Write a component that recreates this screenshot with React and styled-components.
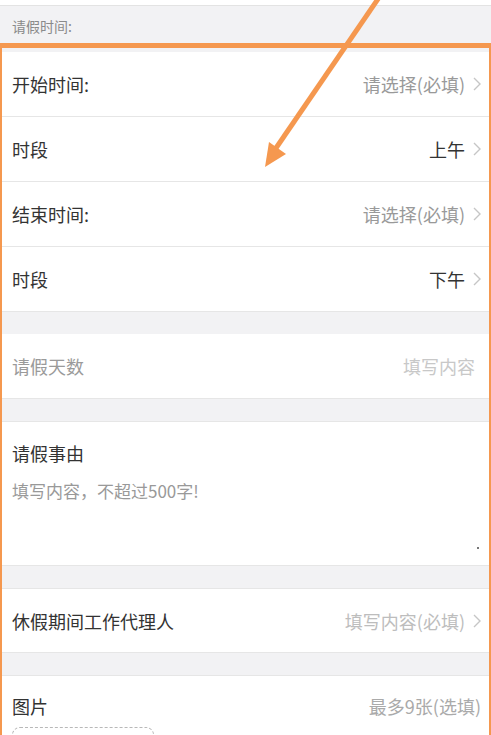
import React from 'react'
import styled, { createGlobalStyle } from 'styled-components'

const GlobalStyle = createGlobalStyle`
  html, body {
    margin: 0;
    padding: 0;
    background: #f2f2f4;
    font-family: "Noto Sans CJK SC", "Noto Sans", sans-serif;
    overflow: hidden;
  }
`

const Page = styled.div`
  position: relative;
  width: 491px;
  height: 735px;
  overflow: hidden;
  background: #f2f2f4;
`

const TopStrip = styled.div`
  height: 5px;
  background: #fff;
  border-bottom: 1px solid #e3e3e3;
`

const SectionTitle = styled.div`
  height: 46px;
  padding: 0 12px 6px;
  box-sizing: border-box;
  display: flex;
  align-items: center;
  font-size: 14px;
  color: #8a8a8a;
`

const Group = styled.div`
  background: #fff;
  margin-bottom: ${p => p.gap || 0}px;
`

const Row = styled.div`
  height: 65px;
  box-sizing: border-box;
  display: flex;
  align-items: center;
  justify-content: space-between;
  padding: 0 10px 0 12px;
  border-bottom: 1px solid #e6e6e6;
  border-top: ${p => (p.topLine ? '1px solid #e6e6e6' : 'none')};
`

const Label = styled.span`
  font-size: 18px;
  color: ${p => (p.muted ? '#9a9a9a' : '#333')};
`

const Value = styled.span`
  display: flex;
  align-items: center;
  gap: 8px;
  font-size: 18px;
  color: ${p => p.color || '#999'};
  margin-right: ${p => p.inset || 0}px;
`

const Area = styled.div`
  height: 145px;
  box-sizing: border-box;
  position: relative;
  padding: 18px 12px 0;
  border-bottom: 1px solid #e6e6e6;
  border-top: 1px solid #e6e6e6;
`

const AreaHint = styled.div`
  margin-top: 12px;
  font-size: 17px;
  color: #999;
`

const Dot = styled.span`
  position: absolute;
  right: 12px;
  bottom: 16px;
  width: 2px;
  height: 2px;
  background: #777;
`

const PhotoRow = styled.div`
  padding: 17px 10px 0 12px;
  border-top: 1px solid #e6e6e6;
`

const PhotoHead = styled.div`
  display: flex;
  justify-content: space-between;
  align-items: center;
`

const Upload = styled.div`
  margin-top: 8px;
  width: 140px;
  height: 100px;
  border: 1.5px dashed #b8b8b8;
  border-radius: 8px;
`

const Frame = styled.div`
  position: absolute;
  left: -3px;
  top: 43px;
  width: 487px;
  height: 720px;
  border: 5px solid #f5984f;
  pointer-events: none;
`

const Arrow = styled.svg`
  position: absolute;
  left: 0;
  top: 0;
  pointer-events: none;
`

const Chevron = () => (
  <svg width="8" height="14" viewBox="0 0 8 14">
    <polyline points="1,1 7,7 1,13" fill="none" stroke="#c6c6c6" strokeWidth="1.4" />
  </svg>
)

const SelectRow = ({ label, value, color, topLine }) => (
  <Row topLine={topLine}>
    <Label>{label}</Label>
    <Value color={color}>
      {value}
      <Chevron />
    </Value>
  </Row>
)

export default function App() {
  return (
    <Page>
      <GlobalStyle />
      <TopStrip />
      <SectionTitle>请假时间:</SectionTitle>
      <Group gap={22}>
        <SelectRow label="开始时间:" value="请选择(必填)" />
        <SelectRow label="时段" value="上午" color="#333" />
        <SelectRow label="结束时间:" value="请选择(必填)" />
        <SelectRow label="时段" value="下午" color="#333" />
      </Group>
      <Group gap={22}>
        <Row>
          <Label muted>请假天数</Label>
          <Value color="#c8c8c8" inset={6}>填写内容</Value>
        </Row>
      </Group>
      <Group gap={22}>
        <Area>
          <Label>请假事由</Label>
          <AreaHint>填写内容，不超过500字!</AreaHint>
          <Dot />
        </Area>
      </Group>
      <Group gap={22}>
        <SelectRow topLine label="休假期间工作代理人" value="填写内容(必填)" color="#bdbdbd" />
      </Group>
      <Group>
        <PhotoRow>
          <PhotoHead>
            <Label>图片</Label>
            <Value color="#aaa">最多9张(选填)</Value>
          </PhotoHead>
          <Upload />
        </PhotoRow>
      </Group>
      <Frame />
      <Arrow width="491" height="735" viewBox="0 0 491 735">
        <line x1="380" y1="-4" x2="274" y2="151" stroke="#f5984f" strokeWidth="5" />
        <polygon points="265,167 269,142 286,154" fill="#f5984f" />
      </Arrow>
    </Page>
  )
}
